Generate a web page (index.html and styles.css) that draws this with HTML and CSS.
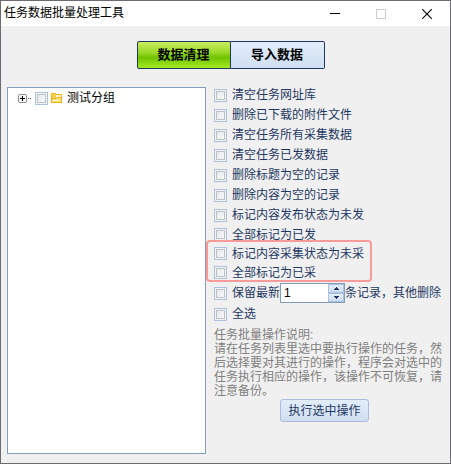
FILE: index.html
```html
<!DOCTYPE html>
<html lang="zh-CN">
<head>
<meta charset="utf-8">
<title>任务数据批量处理工具</title>
<link rel="stylesheet" href="styles.css">
</head>
<body>
<div class="window">
  <header class="titlebar">
    <h1 class="title">任务数据批量处理工具</h1>
    <button class="winbtn" type="button" aria-label="最小化"><svg width="10" height="10" viewBox="0 0 10 10"><path d="M0 4.5h10" stroke="#000"/></svg></button>
    <button class="winbtn" type="button" aria-label="最大化" disabled><svg width="10" height="10" viewBox="0 0 10 10"><path d="M.5 .5h9v9h-9z" fill="none" stroke="#ccc"/></svg></button>
    <button class="winbtn" type="button" aria-label="关闭"><svg width="10" height="10" viewBox="0 0 10 10"><path d="M.2 .2l9.6 9.6M9.8 .2l-9.6 9.6" stroke="#000" stroke-width="1.1"/></svg></button>
  </header>
  <nav class="tabs">
    <button class="tab active" type="button">数据清理</button>
    <button class="tab" type="button">导入数据</button>
  </nav>
  <main class="main">
    <section class="tree">
      <div class="node">
        <button class="expander" type="button" aria-label="展开"><svg width="14" height="9" viewBox="0 0 14 9"><rect x=".5" y=".5" width="8" height="8" rx="1" fill="#f6f6f6" stroke="#8c8c8c"/><path d="M2 4.5h5M4.5 2v5" stroke="#000"/><path d="M10 4.5h1M12 4.5h1" stroke="#555"/></svg></button>
        <input class="check" type="checkbox" id="group">
        <label class="node-label" for="group">
          <svg width="12" height="12" viewBox="0 0 12 12"><path d="M.5 10.500V1.500H4.500L5.500 2.500H10.500V10.500Z" fill="#f9cf4a" stroke="#efb21c"/><path d="M5 3h5v3H5z" fill="#fff6cf"/><path d="M.5 10.500V6.500H5L6.500 5.500H10.500V10.500Z" fill="#ffe27a" stroke="#e9ac1b"/><path d="M2 8.500h5" stroke="#fff8d8"/></svg>
          <span>测试分组</span>
        </label>
      </div>
    </section>
    <form class="options">
      <label class="row"><input class="check" type="checkbox">清空任务网址库</label>
      <label class="row"><input class="check" type="checkbox">删除已下载的附件文件</label>
      <label class="row"><input class="check" type="checkbox">清空任务所有采集数据</label>
      <label class="row"><input class="check" type="checkbox">清空任务已发数据</label>
      <label class="row"><input class="check" type="checkbox">删除标题为空的记录</label>
      <label class="row"><input class="check" type="checkbox">删除内容为空的记录</label>
      <label class="row"><input class="check" type="checkbox">标记内容发布状态为未发</label>
      <label class="row tight"><input class="check" type="checkbox">全部标记为已发</label>
      <div class="marked">
        <label class="row tight"><input class="check" type="checkbox">标记内容采集状态为未采</label>
        <label class="row tight"><input class="check" type="checkbox">全部标记为已采</label>
      </div>
      <div class="row keep">
        <input class="check" type="checkbox" id="keep"><label for="keep">保留最新</label>
        <span class="spinner">
          <input class="count" type="text" value="1" aria-label="保留条数">
          <span class="steps">
            <button class="step" type="button" aria-label="增加"><svg width="5" height="3" viewBox="0 0 5 3"><path d="M2 0h1v1h1v1h1v1H0V2h1V1h1z" fill="#1f3863"/></svg></button>
            <button class="step" type="button" aria-label="减少"><svg width="5" height="3" viewBox="0 0 5 3"><path d="M0 0h5v1H4v1H3v1H2V2H1V1H0z" fill="#1f3863"/></svg></button>
          </span>
        </span>
        <label for="keep">条记录，其他删除</label>
      </div>
      <label class="row"><input class="check" type="checkbox">全选</label>
      <div class="help">
        <p>任务批量操作说明:</p>
        <p>请在任务列表里选中要执行操作的任务，然后选择要对其进行的操作，程序会对选中的任务执行相应的操作，该操作不可恢复，请注意备份。</p>
      </div>
      <button class="run" type="button">执行选中操作</button>
    </form>
  </main>
</div>
</body>
</html>
```

FILE: styles.css
```css
* {
  box-sizing: border-box;
}

body {
  margin: 0;
  color: #1f3863;
  font: 12px/20px "Liberation Sans", "Noto Sans CJK SC", sans-serif;
}

button,
input {
  margin: 0;
  padding: 0;
  color: inherit;
  font: inherit;
}

svg {
  display: block;
}

.window {
  display: flex;
  flex-direction: column;
  min-height: 100vh;
  border: 1px solid #6c6c70;
  background: #f0f0f0;
}

.titlebar {
  display: flex;
  height: 25px;
  background: #fff;
}

.title {
  flex: 1;
  margin: 0;
  padding-left: 3px;
  color: #000;
  font-size: 12px;
  font-weight: 400;
  line-height: 24px;
}

.winbtn {
  display: flex;
  align-items: center;
  justify-content: center;
  width: 46px;
  border: 0;
  background: none;
}

.tabs {
  display: flex;
  justify-content: center;
  padding: 15px 0 18px 10px;
}

.tab {
  width: 94px;
  height: 28px;
  border: 1px solid #1f3863;
  border-radius: 0 2px 2px 0;
  background: linear-gradient(#e2edfa, #cfdff1);
  color: #000;
  font-size: 13px;
  font-weight: 700;
  line-height: 24px;
}

.tab + .tab {
  border-left: 0;
}

.tab.active {
  border-radius: 2px 0 0 2px;
  background: linear-gradient(#c9ef5c, #9bd92b 40%, #6fc300 60%, #a5ea25);
}

.main {
  display: flex;
  flex: 1;
  gap: 8px;
  padding: 0 8px 9px 6px;
}

.tree {
  flex: 1;
  padding-left: 10px;
  border: 1px solid #849dbd;
  background: #fff;
}

.node,
.node-label {
  display: flex;
  align-items: center;
}

.node {
  gap: 3px;
  color: #000;
}

.node-label {
  gap: 4px;
}

.expander {
  border: 0;
  background: none;
}

.check {
  flex: none;
  width: 13px;
  height: 13px;
  appearance: none;
  border: 1px solid #abc1de;
  background: linear-gradient(135deg, #e6e8ea, #f8f8f8) center / 7px 7px no-repeat, linear-gradient(#bcc1c7, #bcc1c7) center / 9px 9px no-repeat, #f4f4f4;
}

.check:checked {
  background: linear-gradient(#1f3863, #1f3863) center / 7px 7px no-repeat, #f4f4f4;
}

.options {
  flex: 0 0 228px;
  margin-top: -2px;
}

.row {
  display: flex;
  align-items: center;
  height: 20px;
  white-space: nowrap;
}

.row .check {
  margin-right: 5px;
}

.row.tight {
  height: 19px;
}

.marked {
  position: relative;
}

.marked::before {
  position: absolute;
  inset: -4px 70px 0 -8px;
  border: 2px solid #f79a9a;
  border-radius: 4px;
  content: "";
  pointer-events: none;
}

.row.keep {
  height: 22px;
}

.spinner {
  display: flex;
  width: 65px;
  height: 20px;
  border: 1px solid #849dbd;
  background: #fff;
}

.count {
  flex: 1;
  min-width: 0;
  padding-left: 3px;
  border: 0;
  background: none;
  color: #000;
  outline: 0;
}

.steps {
  display: flex;
  flex-direction: column;
  width: 16px;
}

.step {
  display: flex;
  flex: 1;
  align-items: center;
  justify-content: center;
  border: 1px solid #abc1de;
  background: linear-gradient(#e2edfa, #cfdff1);
}

.help {
  padding: 4px 0 1px;
  color: #808080;
  line-height: 14px;
}

.help p {
  margin: 0;
}

.run {
  display: block;
  width: 89px;
  height: 23px;
  margin-left: 66px;
  border: 1px solid #abbbd9;
  border-radius: 3px;
  background: linear-gradient(#e2edfa, #cfdff1);
  line-height: 20px;
}
```
